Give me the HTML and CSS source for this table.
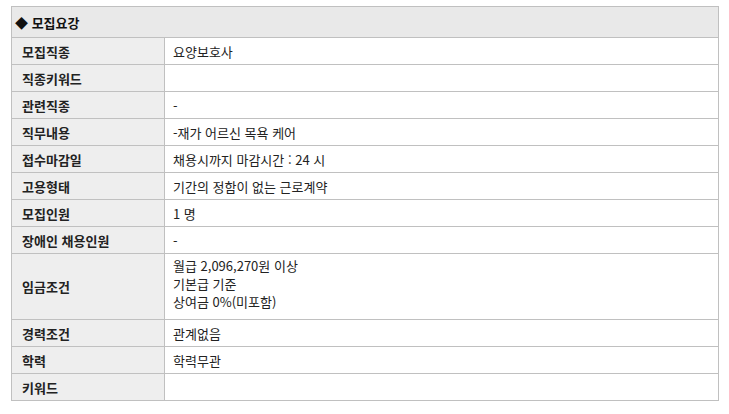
FILE: index.html
```html
<!DOCTYPE html>
<html lang="ko">
<head>
<meta charset="utf-8">
<title>모집요강</title>
<link rel="stylesheet" href="styles.css">
</head>
<body>
<div class="box">
  <div class="head">◆ 모집요강</div>
  <div class="row"><div class="lbl">모집직종</div><div class="val">요양보호사</div></div>
  <div class="row"><div class="lbl">직종키워드</div><div class="val"></div></div>
  <div class="row"><div class="lbl">관련직종</div><div class="val">-</div></div>
  <div class="row"><div class="lbl">직무내용</div><div class="val">-재가 어르신 목욕 케어</div></div>
  <div class="row"><div class="lbl">접수마감일</div><div class="val">채용시까지 마감시간 : 24 시</div></div>
  <div class="row"><div class="lbl">고용형태</div><div class="val">기간의 정함이 없는 근로계약</div></div>
  <div class="row"><div class="lbl">모집인원</div><div class="val">1 명</div></div>
  <div class="row"><div class="lbl">장애인 채용인원</div><div class="val">-</div></div>
  <div class="row tall"><div class="lbl">임금조건</div><div class="val multi"><span>월급 2,096,270원 이상</span><span>기본급 기준</span><span>상여금 0%(미포함)</span></div></div>
  <div class="row"><div class="lbl">경력조건</div><div class="val">관계없음</div></div>
  <div class="row"><div class="lbl">학력</div><div class="val">학력무관</div></div>
  <div class="row last"><div class="lbl">키워드</div><div class="val"></div></div>
</div>
</body>
</html>
```

FILE: styles.css
```css
html, body {
  margin: 0;
  background: #ffffff;
}
body {
  padding: 6px 0 0 11px;
  font-family: "Noto Sans CJK KR", "Noto Sans", sans-serif;
  font-size: 13px;
  color: #222222;
}
.box {
  width: 708px;
  box-sizing: border-box;
  border: 1px solid #c0c0c0;
}
.head {
  height: 30px;
  display: flex;
  align-items: center;
  padding-left: 3px;
  background: #e9e9e9;
  border-bottom: 1px solid #c0c0c0;
  font-weight: bold;
  color: #111111;
}
.row {
  display: grid;
  grid-template-columns: 153px 1fr;
  height: 27px;
  box-sizing: border-box;
  border-bottom: 1px solid #c0c0c0;
}
.row.last {
  border-bottom: none;
  height: 26px;
}
.row.tall {
  height: 66px;
}
.lbl {
  display: flex;
  align-items: center;
  padding-left: 10px;
  background: #eeeeee;
  border-right: 1px solid #c0c0c0;
  font-weight: bold;
  color: #222222;
}
.val {
  display: flex;
  align-items: center;
  padding-left: 8px;
}
.val.multi {
  flex-direction: column;
  align-items: flex-start;
  justify-content: flex-start;
  padding-top: 3px;
  line-height: 18px;
}
```
